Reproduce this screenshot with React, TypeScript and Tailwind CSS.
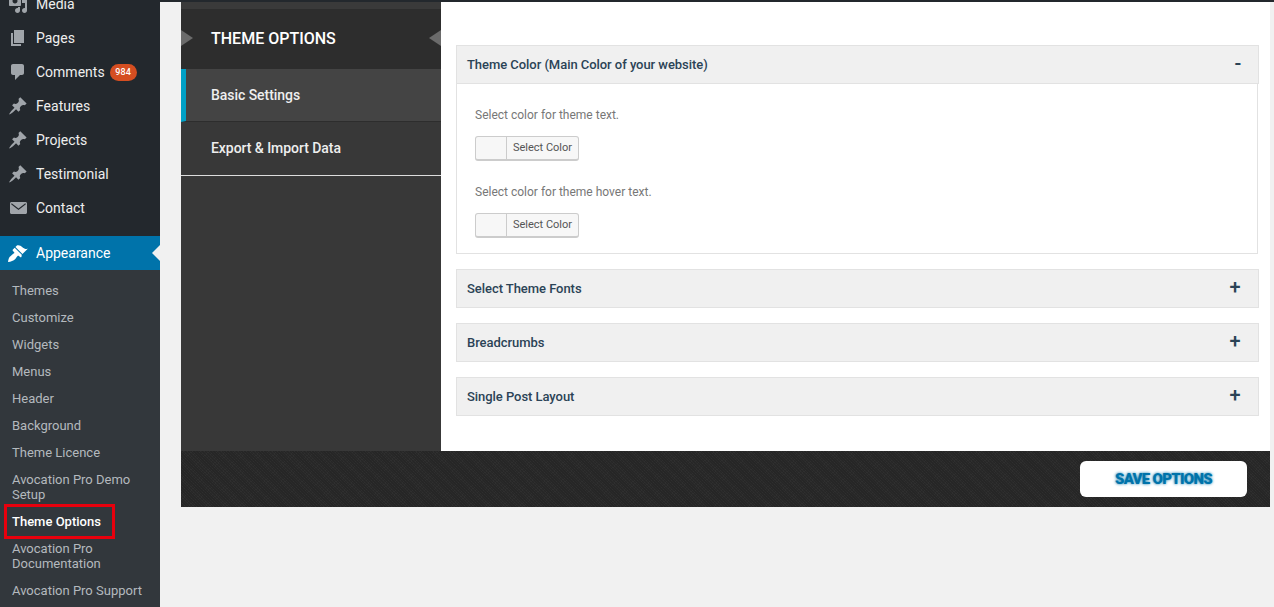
import type { ReactNode } from 'react'

const font = 'font-["Roboto","Liberation_Sans",sans-serif]'

const Dashicon = ({ d, fill = '#a0a5aa', evenOdd }: { d: string; fill?: string; evenOdd?: boolean }) => (
  <svg width="20" height="20" viewBox="0 0 20 20" fill={fill}>
    <path d={d} fillRule={evenOdd ? 'evenodd' : undefined} />
  </svg>
)

const pin =
  'M10.44 3.02l1.82-1.82 6.36 6.35-1.83 1.82c-1.05-.68-2.48-.57-3.41.36l-.75.75c-.92.93-1.04 2.35-.35 3.41l-1.83 1.82-2.41-2.41-2.8 2.79c-.42.42-3.38 2.71-3.8 2.29s1.86-3.39 2.28-3.81l2.79-2.79L4.1 9.36l1.83-1.82c1.05.69 2.48.57 3.41-.36l.75-.75c.93-.92 1.04-2.35.35-3.41z'

const icons: Record<string, ReactNode> = {
  media: (
    <Dashicon d="M13 11V4c0-.55-.45-1-1-1h-1.67L9 1H5L3.67 3H2c-.55 0-1 .45-1 1v7c0 .55.45 1 1 1h10c.55 0 1-.45 1-1zM7 4.5c1.38 0 2.5 1.12 2.5 2.5S8.38 9.5 7 9.5 4.5 8.38 4.5 7 5.62 4.5 7 4.5zM14 6h5v10.5c0 1.38-1.12 2.5-2.5 2.5S14 17.88 14 16.5s1.12-2.5 2.5-2.5c.17 0 .34.02.5.05V9h-3V6zm-4 8.05V13h2v3.5c0 1.38-1.12 2.5-2.5 2.5S7 17.88 7 16.5 8.12 14 9.5 14c.17 0 .34.02.5.05z" />
  ),
  pages: <Dashicon d="M6 15V2h10v13H6zm-1 1h8v2H3V5h2v11z" />,
  comments: (
    <Dashicon d="M5 2h9c1.1 0 2 .9 2 2v7c0 1.1-.9 2-2 2h-2l-5 5v-5H5c-1.1 0-2-.9-2-2V4c0-1.1.9-2 2-2z" />
  ),
  pin: <Dashicon d={pin} />,
  contact: (
    <Dashicon
      evenOdd
      d="M3.5 4h14c.83 0 1.5.67 1.5 1.5v9c0 .83-.67 1.5-1.5 1.5h-14c-.83 0-1.5-.67-1.5-1.5v-9C2 4.67 2.67 4 3.5 4zm.2 1.6c-.5 0-.7.6-.3 1l7.1 5.3 7.1-5.3c.4-.4.2-1-.3-1-.2 0-.4.1-.6.2l-6.2 4.6-6.2-4.6c-.2-.1-.4-.2-.6-.2z"
    />
  ),
}

const menu = [
  { label: 'Media', icon: 'media' },
  { label: 'Pages', icon: 'pages' },
  { label: 'Comments', icon: 'comments', badge: '984' },
  { label: 'Features', icon: 'pin' },
  { label: 'Projects', icon: 'pin' },
  { label: 'Testimonial', icon: 'pin' },
  { label: 'Contact', icon: 'contact' },
]

const submenu = [
  'Themes',
  'Customize',
  'Widgets',
  'Menus',
  'Header',
  'Background',
  'Theme Licence',
  'Avocation Pro Demo Setup',
  'Theme Options',
  'Avocation Pro Documentation',
  'Avocation Pro Support',
]

function Sidebar() {
  return (
    <aside className="w-[160px] h-[607px] shrink-0 overflow-hidden bg-[#23282d]">
      <div className="mt-[-13px] mb-[11px]">
        {menu.map((item) => (
          <div key={item.label} className="flex items-center h-[34px] text-[14px] text-[#eeeeee]">
            <span className="w-[36px] flex pl-[8px] shrink-0">{icons[item.icon]}</span>
            <span>{item.label}</span>
            {item.badge && (
              <span className="ml-[5px] w-[27px] h-[17px] rounded-full bg-[#d54e21] text-white text-center text-[9px] font-medium leading-[17px] tracking-[0.2px]">
                {item.badge}
              </span>
            )}
          </div>
        ))}
      </div>
      <div className="relative flex items-center h-[34px] bg-[#0073aa] text-white text-[14px]">
        <span className="w-[36px] flex pl-[8px] shrink-0">
          <Dashicon
            fill="#ffffff"
            d="M14.48 11.06L7.41 3.99l1.5-1.5c.5-.56 2.3-.47 3.51.32 1.21.8 1.43 1.28 2.91 2.1 1.18.64 2.45 1.26 4.45.85zm-.71.71L6.7 4.7 4.93 6.47c-.39.39-.39 1.02 0 1.41l1.06 1.06c.39.39.39 1.03 0 1.42-.6.6-1.43 1.11-2.21 1.69-.35.26-.7.53-1.01.84C1.43 13.23.28 16.08 0 18.92c2.81-.28 5.7-1.43 7.04-2.77.31-.31.58-.66.84-1.01.58-.78 1.09-1.61 1.69-2.21.39-.39 1.02-.39 1.41 0l1.06 1.06c.39.39 1.02.39 1.41 0z"
          />
        </span>
        <span>Appearance</span>
        <span className="absolute right-0 top-[9px] border-y-[8px] border-r-[8px] border-y-transparent border-r-[#f1f1f1]" />
      </div>
      <ul className="relative h-full bg-[#32373c] pt-[7px]">
        {submenu.map((label) => (
          <li
            key={label}
            className={
              label === 'Theme Options'
                ? 'pl-[12px] pr-[12px] py-[6px] text-[13px] leading-[15px] font-medium text-white'
                : 'pl-[12px] pr-[12px] py-[6px] text-[13px] leading-[15px] text-[#b4b9be]'
            }
          >
            {label}
          </li>
        ))}
        <div className="absolute left-[4px] top-[234px] w-[111px] h-[35px] border-[3px] border-[#e8000d]" />
      </ul>
    </aside>
  )
}

function SelectColor() {
  return (
    <div className="flex w-[104px] h-[25px] rounded-[3px] border border-[#cccccc] border-b-2 bg-[#f7f7f7] overflow-hidden">
      <span className="w-[31px] border-r border-[#cccccc]" />
      <span className="flex-1 text-center text-[11px] leading-[22px] text-[#555555]">Select Color</span>
    </div>
  )
}

function AccordionHead({ title, sign }: { title: string; sign: string }) {
  return (
    <div className="flex items-center justify-between h-[39px] pl-[10px] pr-[17px] bg-[#f0f0f0] border border-[#e2e2e2] text-[#2b4356]">
      <span className="text-[13px] font-medium tracking-[-0.05px]">{title}</span>
      <span
        className={
          sign === '-'
            ? 'text-[20px] font-medium leading-none w-[12px] text-center mt-[-3px] translate-x-[3px]'
            : 'text-[20px] font-medium leading-none w-[12px] text-center mt-[-3px]'
        }
      >
        {sign}
      </span>
    </div>
  )
}

export default function App() {
  return (
    <div className={`${font} flex w-[1274px] h-[607px] overflow-hidden bg-[#f1f1f1]`}>
      <Sidebar />
      <main className="flex-1 min-w-0">
        <div className="h-[2px] bg-[#23282d]" />
        <div className="ml-[21px] mr-[4px]">
          <div className="flex h-[449px]">
            <nav className="w-[260px] shrink-0 bg-[#383838]">
              <div className="h-[7px] bg-[#3a3a3a]" />
              <div className="relative h-[60px] bg-[#2d2d2d] pl-[30px] flex items-center text-[16px] font-medium text-white">
                THEME OPTIONS
                <span className="absolute left-0 top-[21px] border-y-[8px] border-l-[12px] border-y-transparent border-l-[#6b6b6b]" />
                <span className="absolute right-0 top-[21px] border-y-[8px] border-r-[12px] border-y-transparent border-r-[#6b6b6b]" />
              </div>
              <div className="h-[53px] bg-[#444444] border-l-[5px] border-l-[#00a0c6] border-b border-b-[#2d2d2d] pl-[25px] flex items-center text-[14px] font-medium tracking-[-0.05px] text-[#eeeeee]">
                Basic Settings
              </div>
              <div className="h-[54px] border-b border-b-[#dddddd] pl-[30px] flex items-center text-[14px] font-medium tracking-[-0.05px] text-[#eeeeee]">
                Export &amp; Import Data
              </div>
            </nav>
            <section className="flex-1 bg-white pt-[43px] pl-[15px] pr-[11px]">
              <AccordionHead title="Theme Color (Main Color of your website)" sign="-" />
              <div className="mr-[1px] h-[170px] border border-t-0 border-[#e2e2e2] pl-[18px] pt-[23px] text-[12px] text-[#777777]">
                <p className="leading-[16px] mb-[13px]">Select color for theme text.</p>
                <SelectColor />
                <p className="leading-[16px] mt-[23px] mb-[13px]">Select color for theme hover text.</p>
                <SelectColor />
              </div>
              <div className="mt-[15px] flex flex-col gap-[15px]">
                <AccordionHead title="Select Theme Fonts" sign="+" />
                <AccordionHead title="Breadcrumbs" sign="+" />
                <AccordionHead title="Single Post Layout" sign="+" />
              </div>
            </section>
          </div>
          <div className="flex justify-end items-start h-[56px] pt-[10px] pr-[23px] bg-[#2a2a2a] bg-[repeating-linear-gradient(45deg,#262626_0,#262626_1px,transparent_1px,transparent_2px),repeating-linear-gradient(-45deg,#2f2f2f_0,#2f2f2f_1px,transparent_1px,transparent_3px)]">
            <button className="w-[167px] h-[36px] rounded-[6px] bg-white text-[15px] font-black tracking-[-0.7px] text-[#0073aa] [text-shadow:0_0_3px_#0073aa]">
              SAVE OPTIONS
            </button>
          </div>
        </div>
      </main>
    </div>
  )
}
